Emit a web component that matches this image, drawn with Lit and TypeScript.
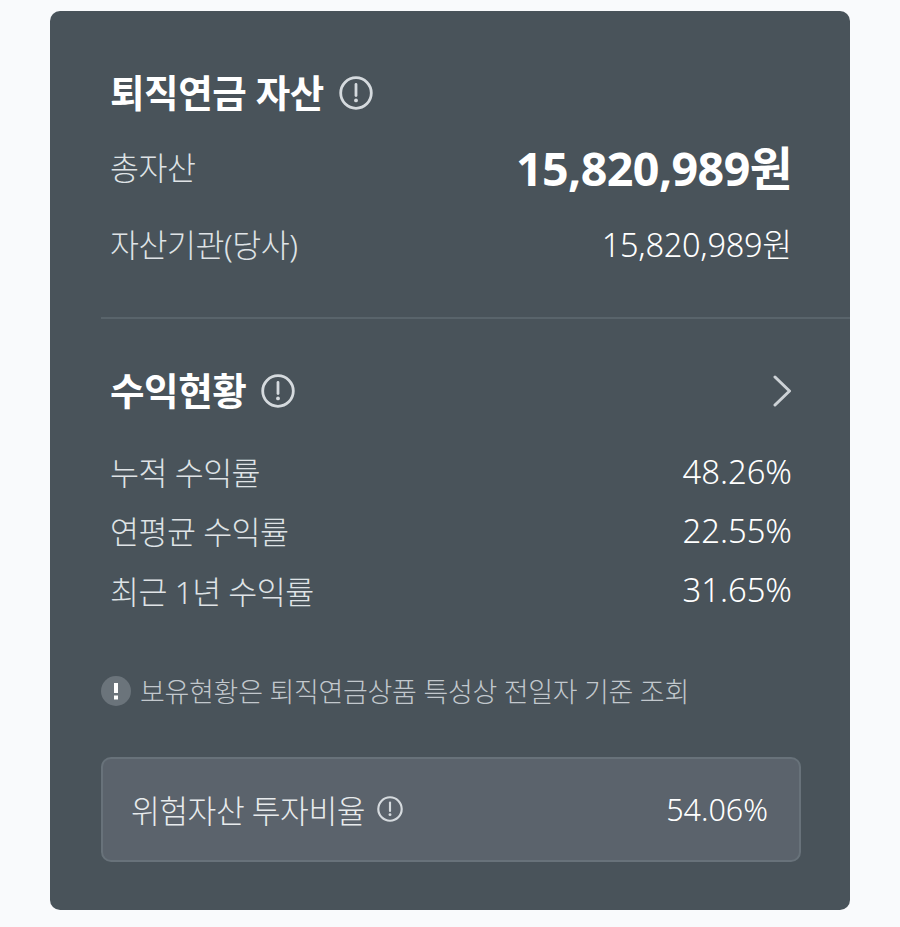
import { LitElement, html, css } from "lit";
import { customElement } from "lit/decorators.js";

const info = (size: number) => html`<svg class="info" width=${size} height=${size} viewBox="0 0 34 34" fill="none" aria-hidden="true">
  <circle cx="17" cy="17" r="15.3" stroke="#d5dade" stroke-width="2.8"></circle>
  <path d="M17 8.5v11" stroke="#d5dade" stroke-width="2.8" stroke-linecap="round"></path>
  <circle cx="17" cy="24.4" r="1.9" fill="#d5dade"></circle>
</svg>`;

@customElement("app-root")
export class AppRoot extends LitElement {
  static styles = css`
    :host {
      display: block;
      width: 900px;
      height: 927px;
      background: #f9fafc;
      font-family: "Noto Sans", "Noto Sans CJK KR", sans-serif;
      overflow: hidden;
    }
    .card {
      box-sizing: border-box;
      margin: 11px 50px 0 50px;
      width: 800px;
      height: 899px;
      background: #49535a;
      border-radius: 10px;
      padding: 58px 0 0 51px;
    }
    .row {
      display: flex;
      justify-content: space-between;
      align-items: center;
      padding: 0 58px 0 9px;
    }
    .heading {
      display: flex;
      align-items: center;
      gap: 15px;
      font-size: 37.5px;
      font-weight: 700;
      color: #fff;
      line-height: 48px;
      letter-spacing: -0.4px;
    }
    .label { font-size: 31.5px; font-weight: 300; color: #dfe3e6; letter-spacing: -0.5px; }
    .value { font-size: 32.8px; font-weight: 300; color: #fff; letter-spacing: 0; }
    .total { margin-top: 24px; height: 50px; }
    .total .value { font-size: 46.6px; font-weight: 700; letter-spacing: -0.6px; }
    .inst { margin-top: 29px; height: 46px; }
    .inst .value { font-size: 32.5px; letter-spacing: -0.25px; }
    .divider {
      margin-top: 51px;
      height: 2px;
      background: #59646b;
    }
    .h2 { margin-top: 48px; height: 48px; }
    .chev { display: block; }
    .rows { margin-top: 34px; display: flex; flex-direction: column; gap: 15.3px; }
    .rows .row { height: 44px; }
    .note {
      display: flex;
      align-items: center;
      gap: 9px;
      margin-top: 59px;
      height: 40px;
      font-size: 27px;
      font-weight: 300;
      color: #c2c8cd;
      letter-spacing: -0.3px;
    }
    .badge {
      width: 30px;
      height: 30px;
      flex: none;
      display: block;
    }
    .risk {
      box-sizing: border-box;
      margin-top: 46px;
      width: 700px;
      height: 105px;
      background: #5b636c;
      border: 2px solid #68727a;
      border-radius: 10px;
      display: flex;
      align-items: center;
      justify-content: space-between;
      padding: 0 31px 0 28px;
    }
    .risk .label { display: flex; align-items: center; gap: 12px; font-size: 31.3px; color: #e8ebed; }
    .risk .value { color: #fff; font-size: 30.5px; }
  `;

  render() {
    return html`<div class="card">
      <div class="row"><div class="heading">퇴직연금 자산 ${info(34)}</div></div>
      <div class="row total"><span class="label">총자산</span><span class="value">15,820,989원</span></div>
      <div class="row inst"><span class="label">자산기관(당사)</span><span class="value">15,820,989원</span></div>
      <div class="divider"></div>
      <div class="row h2">
        <div class="heading">수익현황 ${info(34)}</div>
        <svg class="chev" width="19" height="32" viewBox="0 0 19 32" fill="none" aria-hidden="true"><path d="M2 2l14.5 14L2 30" stroke="#cdd2d6" stroke-width="3" stroke-linecap="round" stroke-linejoin="round"></path></svg>
      </div>
      <div class="rows">
        <div class="row"><span class="label">누적 수익률</span><span class="value">48.26%</span></div>
        <div class="row"><span class="label">연평균 수익률</span><span class="value">22.55%</span></div>
        <div class="row"><span class="label">최근 1년 수익률</span><span class="value">31.65%</span></div>
      </div>
      <div class="note">
        <svg class="badge" viewBox="0 0 30 30" aria-hidden="true">
          <circle cx="15" cy="15" r="15" fill="#6b747b"></circle>
          <path d="M15 7v10" stroke="#fff" stroke-width="4"></path>
          <rect x="13" y="19.5" width="4" height="4" fill="#fff"></rect>
        </svg>
        <span>보유현황은 퇴직연금상품 특성상 전일자 기준 조회</span>
      </div>
      <div class="risk">
        <span class="label">위험자산 투자비율 ${info(26)}</span>
        <span class="value">54.06%</span>
      </div>
    </div>`;
  }
}
